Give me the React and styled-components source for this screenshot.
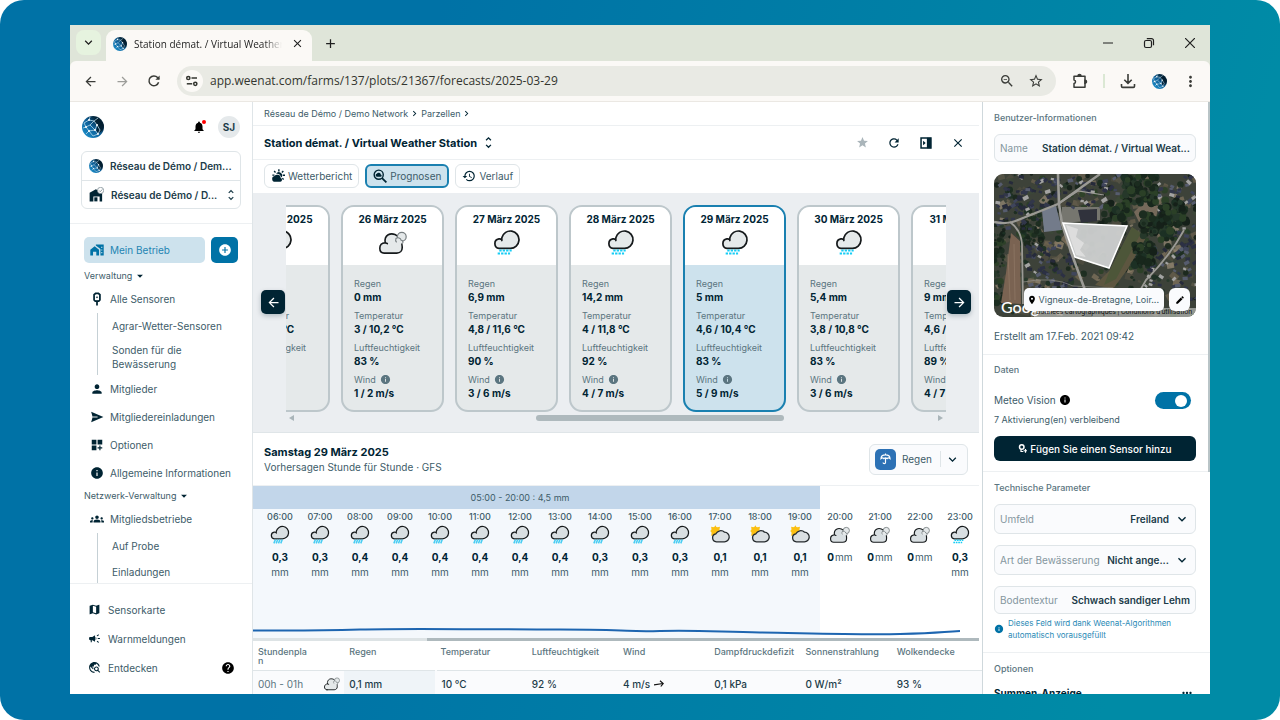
import React from "react";
import styled, { createGlobalStyle, css } from "styled-components";
import {
  MdNotifications, MdAddCircle, MdPerson, MdDashboardCustomize, MdInfo,
  MdGroups, MdMap, MdCampaign, MdTravelExplore, MdHelp, MdStar, MdRefresh, MdClose, MdHistory,
  MdUnfoldMore, MdChevronRight, MdArrowDropDown, MdPlace, MdEdit, MdMoreHoriz, MdStarBorder,
  MdMoreVert, MdZoomOut, MdArrowBack, MdArrowForward, MdExpandMore, MdAdd,
} from "react-icons/md";

const ink = "#002433";
const slate = "#3d5c69";
const muted = "#5b7580";
const line = "#dfe5e8";
const blue = "#0072a6";

const GlobalStyle = createGlobalStyle`
  * { box-sizing: border-box; }
  body { margin: 0; background: #fff; font-family: Inter, "Liberation Sans", sans-serif; color: ${ink}; }
  button, input, select { font: inherit; color: inherit; margin: 0; }
  button { padding: 0; border: 0; background: none; display: flex; align-items: center; justify-content: center; }
  a { color: inherit; text-decoration: none; }
  svg { display: block; flex: none; }
  h1, h2, p, ul { margin: 0; padding: 0; }
  ul { list-style: none; }
`;

const Stage = styled.div`
  height: 100vh;
  padding: 25px 70px 26px;
  display: flex;
  border-radius: 24px;
  background: linear-gradient(105deg, #0072a6 0%, #0072a6 30%, #008ba6 88%);
`;

const BrowserWindow = styled.div`
  flex: 1;
  min-width: 0;
  display: flex;
  flex-direction: column;
  overflow: hidden;
  background: #dfe5d9;
`;

/* Browser chrome */
const TabStrip = styled.div`
  height: 36px;
  padding: 5px 12px 0 6px;
  display: flex;
  align-items: flex-start;
  color: #1f1f1f;
`;
const TabSearch = styled.button`
  width: 25px;
  height: 25px;
  margin-right: 5px;
  border-radius: 8px;
  background: #e6f3df;
`;
const BrowserTab = styled.div`
  width: 206px;
  height: 31px;
  padding: 0 7px 4px;
  display: flex;
  align-items: center;
  gap: 7px;
  border-radius: 9px 9px 0 0;
  background: #fbf9f6;
  font: 10px/16px "Open Sans", sans-serif;
`;
const TabTitle = styled.span`
  flex: 1;
  overflow: hidden;
  white-space: nowrap;
  mask-image: linear-gradient(90deg, #000 88%, transparent);
`;
const NewTab = styled.button`
  width: 36px;
  height: 26px;
`;
const WindowControls = styled.div`
  margin-left: auto;
  height: 26px;
  display: flex;
  align-items: center;
  gap: 25px;
`;
const ControlButton = styled.button`
  width: 16px;
  height: 16px;
`;
const Toolbar = styled.div`
  height: 41px;
  padding: 0 12px;
  display: flex;
  align-items: center;
  border-bottom: 1px solid #ebe8e3;
  border-radius: 6px 6px 0 0;
  background: #fbf9f6;
`;
const NavButtons = styled.div`
  display: flex;
  gap: 16px;
  margin-right: 15px;
`;
const ToolButton = styled.button`
  width: 16px;
  height: 16px;
  color: ${(p) => (p.$dim ? "#9c9d99" : "#3a3c38")};
`;
const UrlBar = styled.div`
  flex: 1;
  height: 30px;
  padding: 0 12px 0 4px;
  display: flex;
  align-items: center;
  gap: 13px;
  border-radius: 15px;
  background: #e9eae4;
`;
const SiteInfo = styled.button`
  width: 22px;
  height: 22px;
  margin-right: -6px;
  border-radius: 50%;
  background: #fbf9f6;
`;
const UrlInput = styled.input`
  flex: 1;
  min-width: 0;
  padding: 0;
  border: 0;
  outline: 0;
  background: none;
  color: #33352f;
  font: 12px/18px "Open Sans", sans-serif;
`;
const ToolbarEnd = styled.div`
  display: flex;
  align-items: center;
  gap: 15px;
  margin-left: 16px;
`;
const ToolbarSeparator = styled.span`
  width: 2px;
  height: 14px;
  background: #dbe8d4;
`;

/* App shell */
const AppShell = styled.div`
  flex: 1;
  min-height: 0;
  display: grid;
  grid-template-columns: 183px minmax(0, 1fr) 228px;
  grid-template-rows: minmax(0, 1fr);
  background: #fff;
  font-size: 10px;
  line-height: 14px;
`;

/* Sidebar */
const Sidebar = styled.aside`
  display: flex;
  flex-direction: column;
  border-right: 1px solid ${line};
  color: ${slate};
`;
const SidebarHeader = styled.div`
  height: 49px;
  padding: 0 12px;
  display: flex;
  align-items: center;
`;
const BellButton = styled.button`
  position: relative;
  margin-left: auto;
  margin-right: 12px;
  color: #000;
`;
const AlertDot = styled.span`
  position: absolute;
  top: 0;
  right: 0;
  width: 4px;
  height: 4px;
  border-radius: 50%;
  background: #f00;
`;
const Avatar = styled.button`
  width: 22px;
  height: 22px;
  border-radius: 50%;
  background: #e5e9eb;
  color: #1c3c49;
  font-size: 10px;
  font-weight: 700;
`;
const NetworkBox = styled.div`
  margin: 0 11px 14px;
  border: 1px solid ${line};
  border-radius: 6px;
`;
const NetworkRow = styled.button`
  width: 100%;
  height: 28px;
  padding: 0 4px 0 7px;
  justify-content: flex-start;
  gap: 7px;
  font-size: 10px;
  font-weight: 600;
  color: #1c3c49;
  white-space: nowrap;
  & + & { border-top: 1px solid ${line}; }
  svg:last-child:not(:first-child) { margin-left: auto; }
`;
const NavScroll = styled.nav`
  flex: 1;
  min-height: 0;
  overflow: hidden;
  padding: 13px 14px 0;
  border-top: 1px solid #edf0f2;
`;
const FarmRow = styled.div`
  display: flex;
  gap: 6px;
  margin-bottom: 4px;
`;
const FarmLink = styled.a`
  width: 121px;
  height: 26px;
  padding: 0 6px;
  display: flex;
  align-items: center;
  gap: 6px;
  border-radius: 5px;
  background: #cde2ed;
  color: #1f85b3;
  svg { color: ${blue}; }
`;
const AddButton = styled.button`
  width: 27px;
  height: 26px;
  border-radius: 5px;
  background: ${blue};
  color: #fff;
`;
const GroupToggle = styled.button`
  height: 18px;
  gap: 1px;
  font-size: 9px;
  svg { color: ${ink}; }
`;
const NavItem = styled.a`
  height: ${(p) => (p.$footer ? 29 : 28)}px;
  padding-left: ${(p) => (p.$footer ? 4 : 6)}px;
  display: flex;
  align-items: center;
  gap: ${(p) => (p.$footer ? 7 : 6)}px;
  svg { color: ${ink}; }
`;
const SubList = styled.ul`
  margin-left: 13px;
  padding-left: 14px;
  border-left: 1px solid #c5d0d5;
`;
const SubItem = styled.li`
  min-height: 26px;
  padding: 4px 0;
  display: flex;
  align-items: center;
  white-space: pre-line;
`;
const SidebarFooter = styled.div`
  height: 111px;
  padding: 11px 14px 0;
  border-top: 1px solid #edf0f2;
`;
const HelpButton = styled.button`
  margin-left: auto;
  margin-right: 3px;
  svg { color: #000; }
`;

/* Main column */
const Main = styled.main`
  min-width: 0;
  padding-right: 3px;
  overflow: hidden;
`;
const Breadcrumbs = styled.nav`
  height: 24px;
  padding-left: 11px;
  display: flex;
  align-items: center;
  gap: 1px;
  border-bottom: 1px solid #edf0f2;
  font-size: 9px;
  color: ${slate};
`;
const TitleBar = styled.div`
  height: 34px;
  padding: 0 13px 0 11px;
  display: flex;
  align-items: center;
  gap: 4px;
  border-bottom: 1px solid #edf0f2;
`;
const StationTitle = styled.h1`
  font-size: 11px;
  line-height: 16px;
  font-weight: 700;
`;
const TitleActions = styled.div`
  display: flex;
  gap: 16px;
  margin-left: auto;
`;
const ViewTabs = styled.div`
  height: 33px;
  padding: 4px 11px 0;
  display: flex;
  gap: 6px;
`;
const ViewTab = styled.button`
  height: 24px;
  padding: 0 6px;
  gap: 3px;
  border: ${(p) => (p.$active ? "2px solid #1a80b0" : `1px solid ${line}`)};
  border-radius: 6px;
  background: ${(p) => (p.$active ? "#cde2ed" : "#fff")};
  color: ${slate};
  font-size: 10px;
  svg { color: ${ink}; }
`;

const Carousel = styled.section`
  height: 240px;
  padding: 12px 8px 0;
  display: grid;
  grid-template-columns: 25px minmax(0, 1fr) 25px;
  border-bottom: 1px solid ${line};
  background: #ebeef1;
`;
const CarouselButton = styled.button`
  width: 24px;
  height: 24px;
  margin-top: 85px;
  justify-self: ${(p) => p.$side};
  border-radius: 5px;
  background: ${ink};
  color: #fff;
  box-shadow: 0 2px 5px rgba(0, 36, 51, 0.25);
`;
const CardStrip = styled.div`
  overflow: hidden;
`;
const CardTrack = styled.div`
  display: flex;
  gap: 11px;
  margin-left: -59px;
`;
const DayCard = styled.article`
  flex: none;
  width: 103px;
  height: 207px;
  overflow: hidden;
  border: 2px solid ${(p) => (p.$selected ? "#1a80b0" : "#bdc7cb")};
  border-radius: 13px;
  background: ${(p) => (p.$selected ? "#cde2ed" : "#e5e9ea")};
`;
const DayHead = styled.header`
  height: 58px;
  padding-top: 5px;
  display: flex;
  flex-direction: column;
  align-items: center;
  gap: 3px;
  background: #fff;
  font-size: 10px;
  line-height: 14px;
  font-weight: 700;
`;
const Measures = styled.div`
  padding: 12px 0 0 11px;
  display: flex;
  flex-direction: column;
  gap: 5px;
`;
const Measure = styled.div`
  white-space: nowrap;
`;
const MeasureLabel = styled.p`
  display: flex;
  align-items: center;
  gap: 4px;
  font-size: 9px;
  line-height: 13px;
  color: ${muted};
`;
const MeasureValue = styled.p`
  font-size: 10px;
  line-height: 14px;
  font-weight: 700;
`;
const ScrollBar = styled.div`
  height: 12px;
  padding: 0 3px;
  display: flex;
  align-items: center;
  color: #aab5ba;
`;
const ScrollThumb = styled.span`
  width: 38%;
  height: 6px;
  margin-left: 37%;
  margin-right: auto;
  border-radius: 3px;
  background: #aeb9bd;
`;

const HourlyHeader = styled.div`
  height: 53px;
  padding: 0 11px;
  display: flex;
  align-items: center;
  justify-content: space-between;
  border-bottom: 1px solid #edf0f2;
`;
const DayTitle = styled.h2`
  font-size: 11px;
  line-height: 15px;
  font-weight: 700;
`;
const DaySubtitle = styled.p`
  color: ${slate};
`;
const MetricPicker = styled.div`
  height: 31px;
  width: 99px;
  padding-left: 5px;
  display: flex;
  align-items: center;
  position: relative;
  border: 1px solid ${line};
  border-radius: 6px;
  background: #fafbfd;
  > svg { position: absolute; right: 7px; pointer-events: none; }
`;
const MetricBadge = styled.span`
  width: 21px;
  height: 21px;
  display: flex;
  align-items: center;
  justify-content: center;
  border-radius: 5px;
  background: #2c71b5;
  color: #fff;
`;
const MetricSelect = styled.select`
  flex: 1;
  align-self: stretch;
  padding: 0 0 0 6px;
  border: 0;
  outline: 0;
  appearance: none;
  background: linear-gradient(${line}, ${line}) 44px center / 1px 16px no-repeat;
  color: ${slate};
`;

const Timeline = styled.section`
  position: relative;
  overflow: hidden;
`;
const TimelineTrack = styled.div`
  width: 760px;
  margin-left: -33px;
`;
const RainBand = styled.div`
  width: 600px;
  height: 23px;
  line-height: 23px;
  text-align: center;
  background: #c2d6ea;
  color: ${slate};
  font-size: 9px;
`;
const Hours = styled.div`
  display: grid;
  grid-template-columns: repeat(19, 40px);
  height: 129px;
`;
const Hour = styled.div`
  display: flex;
  flex-direction: column;
  align-items: center;
  background: ${(p) => (p.$wet ? "#f4f8fc" : "#fff")};
`;
const HourTime = styled.span`
  margin-bottom: 1px;
  font-size: 9px;
  line-height: 15px;
  font-weight: 500;
  color: ${slate};
`;
const HourAmount = styled.p`
  margin-top: 5px;
  width: 28px;
  line-height: 15px;
  text-align: center;
  color: ${slate};
  white-space: ${(p) => (p.$inline ? "nowrap" : "normal")};
  b { font-weight: 700; color: ${ink}; ${(p) => (p.$inline ? "margin-right: 1px;" : "display: block;")} }
`;
const RainCurve = styled.svg`
  position: absolute;
  left: -33px;
  bottom: 3px;
  width: 760px;
  height: 16px;
`;
const TimelineScroll = styled.div`
  height: 3px;
  display: flex;
  justify-content: flex-end;
  background: #dde3e5;
  &::after { content: ""; width: 76%; background: #aeb9bd; }
`;

const HourTable = styled.table`
  width: calc(100% + 4px);
  border-collapse: collapse;
  table-layout: fixed;
  th, td { padding: 0 0 0 5px; text-align: left; white-space: nowrap; }
  th { height: 29px; padding-top: 6px; vertical-align: top; border-bottom: 1px solid ${line}; color: ${muted}; font-size: 9px; line-height: 9px; font-weight: 500; white-space: pre-line; }
  td { height: 28px; background: #fafbfd; color: #1c3c49; font-weight: 500; }
  td:nth-child(2) { background: #eff4f8; background-clip: padding-box; border-right: 2px solid #fafbfd; }
`;
const TimeCell = styled.div`
  display: flex;
  align-items: center;
  justify-content: space-between;
  padding-right: 4px;
  color: ${muted};
  font-weight: 400;
`;
const WindCell = styled.span`
  display: flex;
  align-items: center;
  gap: 4px;
`;

/* Details panel */
const Details = styled.aside`
  position: relative;
  overflow: hidden;
  border-left: 1px solid #cfd8dc;
  color: ${slate};
`;
const PanelThumb = styled.span`
  position: absolute;
  top: 0;
  right: 0;
  width: 2px;
  height: 370px;
  background: #b9c4c7;
`;
const Panel = styled.section`
  padding: ${(p) => (p.$roomy ? 10 : 9)}px 14px ${(p) => (p.$roomy ? 11 : 10)}px 11px;
  border-bottom: 1px solid #edf0f2;
  &:first-child { padding-top: 10px; }
`;
const PanelTitle = styled.h2`
  font-size: 9px;
  line-height: 12px;
  font-weight: 500;
  color: ${muted};
`;
const Field = styled.label`
  height: ${(p) => (p.$tall ? 30 : 28)}px;
  margin-top: ${(p) => p.$gap || 10}px;
  padding: 0 5px;
  display: flex;
  align-items: center;
  gap: 5px;
  border: 1px solid ${line};
  border-radius: 6px;
  background: #fafbfd;
  color: #84969e;
  white-space: nowrap;
`;
const fieldControl = css`
  flex: 1;
  min-width: 0;
  height: 20px;
  padding: 0;
  border: 0;
  outline: 0;
  appearance: none;
  background: none;
  color: #1c3c49;
  font-weight: 600;
`;
const FieldInput = styled.input`
  ${fieldControl}
  text-align: right;
`;
const FieldSelect = styled.select`
  ${fieldControl}
  text-align-last: right;
`;
const FieldArrow = styled.span`
  color: ${ink};
`;
const MapFrame = styled.div`
  position: relative;
  height: 143px;
  margin-top: 12px;
  overflow: hidden;
  border-radius: 9px;
  > svg { width: 100%; height: 100%; }
`;
const MapCredits = styled.div`
  position: absolute;
  right: 0;
  bottom: 0;
  padding: 0 4px 0 2px;
  background: rgba(235, 235, 235, 0.5);
  color: #111;
  font: 7px/9px Roboto, sans-serif;
  white-space: nowrap;
`;
const MapBrand = styled.span`
  position: absolute;
  left: 7px;
  bottom: 0;
  color: #fff;
  font: 500 16px/20px Lato, sans-serif;
`;
const MapOverlay = styled.div`
  position: absolute;
  right: 6px;
  bottom: 6px;
  display: flex;
  gap: 5px;
`;
const PlaceChip = styled.div`
  height: 23px;
  padding: 0 5px 0 3px;
  display: flex;
  align-items: center;
  gap: 2px;
  border-radius: 5px;
  background: #fafbfd;
  font-size: 9px;
  white-space: nowrap;
  svg { color: #000; }
`;
const EditButton = styled.button`
  width: 21px;
  height: 23px;
  border-radius: 6px;
  background: #fafbfd;
  color: #000;
`;
const CreatedAt = styled.p`
  margin: 12px 0 1px;
`;
const SwitchRow = styled.label`
  height: 18px;
  margin-top: 15px;
  padding-right: 5px;
  display: flex;
  align-items: center;
  gap: 3px;
  svg { color: #000; }
`;
const Switch = styled.input`
  position: relative;
  appearance: none;
  width: 36px;
  height: 17px;
  margin-left: auto;
  border-radius: 9px;
  background: ${blue};
  &::after {
    content: "";
    position: absolute;
    top: 3px;
    right: 4px;
    width: 12px;
    height: 12px;
    border-radius: 50%;
    background: #fff;
  }
`;
const Remaining = styled.p`
  margin-top: 5px;
  font-size: 9px;
  line-height: 12px;
`;
const SensorButton = styled.button`
  width: 100%;
  height: 25px;
  margin-top: 10px;
  gap: 3px;
  border-radius: 6px;
  background: ${ink};
  color: #fff;
  font-size: 10px;
  font-weight: 500;
`;
const Hint = styled.p`
  margin-top: 3px;
  display: flex;
  align-items: center;
  gap: 4px;
  font-size: 8px;
  line-height: 12px;
  color: #2a8ab6;
  white-space: pre-line;
  svg { color: ${blue}; }
`;
const SummaryRow = styled.div`
  margin-top: 11px;
  padding-right: 2px;
  display: flex;
  justify-content: space-between;
  align-items: center;
  color: ${ink};
  font-size: 10px;
  font-weight: 700;
`;

/* Drawings */
function Globe({ size }) {
  return (
    <svg width={size} height={size} viewBox="0 0 22 22" aria-hidden="true">
      <defs>
        <linearGradient id="globeFill" x1="0" y1="1" x2="1" y2="0">
          <stop offset="0" stopColor="#1f9ad6" />
          <stop offset="0.5" stopColor="#0d5f98" />
          <stop offset="0.75" stopColor="#04283f" />
        </linearGradient>
      </defs>
      <circle cx="11" cy="11" r="11" fill="url(#globeFill)" />
      <path d="M14 1.500l5 2.500 2.800 5-1 5-4.500 4-2-3.500 1.200-5L12 5z" fill="#031c2c" opacity="0.8" />
      <g fill="none" stroke="#b5d8ea" strokeWidth="0.8">
        <path d="M2 7l5-3 5 1 3 4-2 5-6 1-3-4zM7 4l1-3M12 5l4-3M13 14l3 4M7 15l-3 3M4 11l-3 1M7 15l4 5 5-2M8 9l4-4M8 9l5 5M8 9L4 11M15 9l3 5-2 4" />
      </g>
      <g fill="#fff">
        <circle cx="7" cy="4" r="1" /><circle cx="15" cy="9" r="1" /><circle cx="13" cy="14" r="1" />
        <circle cx="7" cy="15" r="1" /><circle cx="4" cy="11" r="1" /><circle cx="16" cy="18" r="0.9" />
      </g>
    </svg>
  );
}

function WeatherIcon({ kind, size = 28, fill = "#e5e9ea" }) {
  return (
    <svg width={size} height={size} viewBox="0 0 28 28" aria-hidden="true">
      {kind === "sun" && (
        <g>
          <g fill="#fbc013">
            <circle cx="7.5" cy="8.5" r="5.8" />
            <path d="M7.5 0.500l2.500 4h-5zM0 8.500l4-2.500v5zM1.500 2.500l5 1-4 4zM14 2.500l-1 5-4-4zM1.500 15l1-5 4 4z" />
          </g>
          <path
            d="M9 23.500h11a6.700 6.700 0 0 0 .4-13.400 7.600 7.600 0 0 0-12.200 2.300A5.600 5.600 0 0 0 9 23.500z"
            fill="#d9dfe2" stroke="#23292c" strokeWidth="1.800"
          />
        </g>
      )}
      {(kind === "rain" || kind === "drizzle") && (
        <g transform="translate(-1 -2.600) scale(1.070)">
          <path
            d="M6.600 20.500h10.600a8.100 8.100 0 1 0-7.900-10.200c-.2.9-.3 2-.1 2.900M9.200 12.300c-.9-.6-1.700-.8-2.800-.6a4.450 4.450 0 0 0 .2 8.800"
            fill={fill} stroke="#15191b" strokeWidth="1.600" strokeLinecap="round"
          />
          {kind === "rain" ? (
            <path d="M6.800 22.500h11.600M5.300 25.300h11.600" stroke="#17cdf5" strokeWidth="1.900" strokeDasharray="2.200 1" />
          ) : (
            <path d="M8 21.500l-2 5M11 21.500l-2 5M14 21.500l-2 5M17 21.500l-2 5" stroke="#47cdf3" strokeWidth="2" />
          )}
        </g>
      )}
      {kind === "moon" && (
        <g>
          <path
            d="M5.200 24.100h12.600c3.400 0 5.400-2.400 5.400-5.300 0-3 .3-5.500-2-8.300-2-4.800-8-7-12-4.700-2.600 1.500-3.600 4.400-3 8-3 .2-5.400 2.200-5.400 5.400 0 3 1.900 4.900 4.400 4.900zM6 13.700l2.300.9"
            fill={fill} stroke="#15191b" strokeWidth="1.600" strokeLinecap="round"
          />
          <circle cx="22.800" cy="7.700" r="4.400" fill="#e5e9ea" stroke="#777e81" strokeWidth="1.200" />
          <path d="M16.800 9.500c2-1.600 5-.6 5.400 1.800 1.700.2 2.300 1.800 1.500 3.200h-5c-2.200-.2-3-3-1.900-5z" fill="#e5e9ea" />
          <path d="M16.800 9.500c2-1.600 5-.6 5.400 1.800 1.700.2 2.300 1.800 1.300 3.200M17 9.400c-.7 1.600-.3 3 .6 3.900" fill="none" stroke="#777e81" strokeWidth="1.100" />
        </g>
      )}
    </svg>
  );
}

const SunCloudIcon = () => (
  <svg width="14" height="14" viewBox="0 0 24 24" fill="currentColor">
    <path d="M7 22a5 5 0 0 1-1-9.900 6 6 0 0 1 10.700 3.200A3.500 3.500 0 0 1 16 22z" />
    <path d="M8.700 8.200a5.600 5.600 0 0 1 9.500 6.100 5.400 5.400 0 0 0-1-.5 7.600 7.600 0 0 0-8.500-5.600z" />
    <path d="M12.300 0.500h2.400v3.600h-2.400zM20.300 9.500H24v2.400h-3.700zM4.500 4.300l1.700-1.700 2.400 2.500-1.700 1.700zM17.800 5.200l2.500-2.500L22 4.400l-2.500 2.500zM18.600 16.500l1.600-1.600 2.200 2.200-1.600 1.600zM2.300 9.500H6v2H2.300z" />
  </svg>
);
const ForecastIcon = () => (
  <svg width="14" height="14" viewBox="0 0 24 24" fill="none" stroke="currentColor" strokeWidth="2.400">
    <circle cx="9.800" cy="9.800" r="7.800" />
    <path d="M15.500 15.500L23 23" strokeWidth="3" />
    <path d="M6.800 13.400a2.700 2.700 0 0 1-.2-5.300 3.800 3.800 0 0 1 6.800 1.400 2 2 0 0 1-.2 3.900z" fill="currentColor" stroke="none" />
  </svg>
);
const FarmIcon = () => (
  <svg width="14" height="14" viewBox="0 0 24 24" fill="currentColor">
    <path d="M0.500 21.500V11.500L8 5.500l7.500 6v10h-4.700v-6.300H5.200v6.300z" />
    <path d="M10 2.500h13.500v19h-5.600V10.300L10 4.200z" />
    <path d="M19.300 6.500h1.800v2h-1.800zM19.300 11h1.800v2h-1.800zM19.300 15.500h1.800v2h-1.800z" fill="#cde2ed" />
  </svg>
);
const SendIcon = () => (
  <svg width="14" height="14" viewBox="0 0 24 24">
    <path d="M2 3l21 9-21 9 2.500-9z" fill="currentColor" />
    <path d="M4 12h9" stroke="#fff" strokeWidth="1.600" />
  </svg>
);
const PinIcon = () => (
  <svg width="14" height="14" viewBox="0 0 24 24" fill="none" stroke="currentColor" strokeWidth="3">
    <path d="M7 4.500L9.500 2.500h5L17 4.500v9l-2 2H9l-2-2z" />
    <circle cx="12" cy="9" r="1" fill="currentColor" strokeWidth="1" />
    <path d="M12 15v8" />
  </svg>
);
const BarnIcon = () => (
  <svg width="15" height="15" viewBox="0 0 24 24">
    <path d="M1 9l10-5.500L21 9v14h-4v-8H7v8H1z" fill="#002433" />
    <path d="M8.500 16.500h5V23h-5z" fill="#002433" />
    <circle cx="18.500" cy="5.500" r="5" fill="#fff" stroke="#6d7f87" strokeWidth="1.100" />
    <path d="M16 5.500l2 2 3.200-3.600" fill="none" stroke="#6d7f87" strokeWidth="1.300" />
  </svg>
);
const SidePanelIcon = () => (
  <svg width="14" height="14" viewBox="0 0 24 24">
    <path d="M3.500 3.500h17v17h-17z" fill="none" stroke="#002433" strokeWidth="2.600" />
    <path d="M13.500 3h7v18h-7z" fill="#002433" />
    <path d="M7 8l4.500 4L7 16z" fill="#002433" />
  </svg>
);
const UmbrellaIcon = () => (
  <svg width="11" height="12" viewBox="0 0 11 12" fill="none" stroke="currentColor" strokeWidth="1.200">
    <path d="M5.500 0.500v1.200M1 5.600C1 3.200 3 1.800 5.500 1.800S10 3.200 10 5.600c-1-.9-2.100-.9-2.900 0-1-.9-2.200-.9-3.200 0-.8-.9-1.900-.9-2.900 0zM5.500 5.500v4a1.200 1.200 0 0 1-2.400 0" />
  </svg>
);
const TuneIcon = () => (
  <svg width="14" height="14" viewBox="0 0 14 14" fill="none" stroke="#33352f" strokeWidth="1.500">
    <circle cx="3.300" cy="4" r="1.600" /><path d="M6.500 4H12" />
    <circle cx="10.300" cy="9.800" r="1.600" /><path d="M1.800 9.800h5.400" />
  </svg>
);
const PuzzleIcon = () => (
  <svg width="16" height="16" viewBox="0 0 16 16" fill="none" stroke="currentColor" strokeWidth="1.500">
    <path d="M2 3.200h11v11H2v-3.700c2-.4 2-3.200 0-3.600z" strokeLinejoin="round" />
    <path d="M6 3a1.500 1.500 0 0 1 3 0z" fill="currentColor" />
    <path d="M13 7.200a1.500 1.500 0 0 1 0 3z" fill="currentColor" />
  </svg>
);
const DownloadIcon = () => (
  <svg width="16" height="16" viewBox="0 0 16 16" fill="none" stroke="currentColor" strokeWidth="1.600">
    <path d="M8 1v9M4.300 6.700L8 10.300l3.700-3.600M1.500 11v2.200c0 .7.400 1.200 1.200 1.200h10.600c.8 0 1.200-.5 1.200-1.200V11" />
  </svg>
);
const ReloadIcon = () => (
  <svg width="14" height="14" viewBox="0 0 14 14">
    <path d="M11.600 8.300A4.900 4.900 0 1 1 10.600 3.600L12 5" fill="none" stroke="currentColor" strokeWidth="1.500" />
    <path d="M12.600 1.500v4.200H8.400z" fill="currentColor" />
  </svg>
);
const RestoreIcon = () => (
  <svg width="12" height="12" viewBox="0 0 12 12" fill="none" stroke="currentColor" strokeWidth="1.200">
    <rect x="1.500" y="3.500" width="7" height="7" rx="1.500" />
    <path d="M3.800 1.600H8.500a2 2 0 0 1 2 2v4.700" />
  </svg>
);
const SensorAddIcon = () => (
  <svg width="9" height="9" viewBox="0 0 12 12" fill="none" stroke="currentColor" strokeWidth="2">
    <circle cx="5" cy="4" r="3" />
    <path d="M4 7v3h3M10 6.500v5M7.500 9h5" strokeWidth="1.600" />
  </svg>
);
const ScrollArrow = ({ back }) => (
  <svg width="5" height="6" viewBox="0 0 5 6"><path d={back ? "M5 0v6L0 3z" : "M0 0v6l5-3z"} fill="currentColor" /></svg>
);
const WindArrow = () => (
  <svg width="10" height="8" viewBox="0 0 10 8" fill="none" stroke="#111" strokeWidth="1.200">
    <path d="M0 4.800L9 3.500M6 0.800L9.200 3.500 6.800 6.500" />
  </svg>
);

/* Seeded generator so that the aerial view is identical on every render */
function seeded(seed) {
  let s = seed;
  return () => {
    s = (s * 1664525 + 1013904223) % 4294967296;
    return s / 4294967296;
  };
}
function scatter(seed, count, x, y, w, h) {
  const r = seeded(seed);
  return Array.from({ length: count }, () => ({ x: x + r() * w, y: y + r() * h, s: r(), a: r() * 90 - 45, k: Math.floor(r() * 6) }));
}
const roofs = ["#262a3a", "#32374a", "#3f455b", "#565c6e", "#a3a3a2", "#2c3044"];
const soils = ["#6e6450", "#857660", "#514f40", "#9a8c76", "#5c5a49", "#3c4838"];
const greens = ["#18271c", "#1c3024", "#26382a", "#152019", "#2b4027", "#1b2c1f"];
const lots = scatter(3, 230, 0, 0, 202, 143);
const houses = [
  ...scatter(7, 85, 0, 0, 125, 34), ...scatter(8, 65, 30, 68, 50, 50), ...scatter(10, 22, 0, 30, 50, 24),
  ...scatter(9, 60, 142, 70, 60, 60), ...scatter(11, 35, 150, 0, 52, 38), ...scatter(13, 20, 170, 50, 32, 30),
];
const trees = [...scatter(21, 240, 0, 0, 202, 143), ...scatter(22, 45, 0, 55, 10, 80), ...scatter(23, 50, 28, 42, 20, 30)];
const grove = [...scatter(31, 70, 128, 0, 34, 30), ...scatter(32, 60, 148, 40, 34, 26), ...scatter(33, 40, 140, 68, 20, 26), ...scatter(34, 50, 165, 26, 28, 25), ...scatter(35, 24, 112, 28, 24, 18)];

function AerialMap() {
  return (
    <svg viewBox="0 0 202 143" preserveAspectRatio="xMidYMid slice" role="img" aria-label="Luftbild">
      <rect width="202" height="143" fill="#3d4239" />
      {lots.map((p, i) => (
        <rect key={i} x={p.x} y={p.y} width={3 + p.s * 6} height={2 + p.s * 5} fill={soils[p.k]} opacity="0.7" transform={`rotate(${p.a} ${p.x} ${p.y})`} />
      ))}
      {trees.map((p, i) => <circle key={i} cx={p.x} cy={p.y} r={1 + p.s * 2.5} fill={greens[p.k]} opacity="0.9" />)}
      <path d="M17 59l9 8 1 63-20-1 5-30z" fill="#7a6352" />
      <path d="M14 80l2 46M20 70l1 56" stroke="#8a7361" strokeWidth="1" />
      <path d="M48 36l14-4 6 24-18 2z" fill="#737b8a" />
      <path d="M68 33h38v13l-38 3z" fill="#76766f" />
      <path d="M84 36l19-1v12l-16 2z" fill="#30323c" />
      {houses.map((p, i) => (
        <rect key={i} x={p.x} y={p.y} width={3 + p.s * 3} height={2 + p.s * 2} fill={roofs[p.k]} transform={`rotate(${p.a} ${p.x} ${p.y})`} />
      ))}
      <path d="M138 53l14 11-19 32-14 19-18-4 15-15z" fill="#5d5640" />
      <path d="M138 53l9 6-25 46-12 6 6-15z" fill="#4d5639" />
      <path d="M140 38l10-10 14 4-2 14-14 8z" fill="#75695a" />
      {grove.map((p, i) => <circle key={i} cx={p.x} cy={p.y} r={1.5 + p.s * 3} fill={greens[p.k]} />)}
      <g fill="none" stroke="#9b9a95">
        <path d="M64 0l1 30 3 20 9 28 14 38" strokeWidth="2.600" />
        <path d="M0 48q14 3 24-2l40-16 42-30" strokeWidth="2.400" />
        <path d="M16 48q11 8 12 22l1 60" strokeWidth="1.800" />
        <path d="M190 56q-14 26-38 50l-8 14" strokeWidth="1.800" />
        <path d="M66 29l18-12 26 4" strokeWidth="1.200" />
        <path d="M29 108q30-6 50 4l40 2" strokeWidth="1" opacity="0.6" />
      </g>
      <path d="M69 49l64 3-18 42-34-11z" fill="#cfd1d1" fillOpacity="0.95" stroke="#fff" strokeWidth="1.600" />
      <path d="M72 51l12 4-2 8 8 6-4 7 6 7-10-2z" fill="#e2e2e2" opacity="0.8" />
    </svg>
  );
}

/* Data */
const days = [
  { date: "25 März 2025", icon: "rain", rain: "2,1 mm", temp: "3,4 / 9,7 °C", hum: "86 %", wind: "2 / 4 m/s" },
  { date: "26 März 2025", icon: "moon", rain: "0 mm", temp: "3 / 10,2 °C", hum: "83 %", wind: "1 / 2 m/s" },
  { date: "27 März 2025", icon: "rain", rain: "6,9 mm", temp: "4,8 / 11,6 °C", hum: "90 %", wind: "3 / 6 m/s" },
  { date: "28 März 2025", icon: "rain", rain: "14,2 mm", temp: "4 / 11,8 °C", hum: "92 %", wind: "4 / 7 m/s" },
  { date: "29 März 2025", icon: "rain", rain: "5 mm", temp: "4,6 / 10,4 °C", hum: "83 %", wind: "5 / 9 m/s", selected: true },
  { date: "30 März 2025", icon: "rain", rain: "5,4 mm", temp: "3,8 / 10,8 °C", hum: "83 %", wind: "3 / 6 m/s" },
  { date: "31 März 2025", icon: "rain", rain: "9 mm", temp: "4,6 / 11,2 °C", hum: "89 %", wind: "4 / 7 m/s" },
];
const hourly = [
  ["05:00", "0,3", "drizzle"], ["06:00", "0,3", "drizzle"], ["07:00", "0,3", "drizzle"], ["08:00", "0,4", "drizzle"],
  ["09:00", "0,4", "drizzle"], ["10:00", "0,4", "drizzle"], ["11:00", "0,4", "drizzle"], ["12:00", "0,4", "drizzle"],
  ["13:00", "0,4", "drizzle"], ["14:00", "0,3", "drizzle"], ["15:00", "0,3", "drizzle"], ["16:00", "0,3", "drizzle"],
  ["17:00", "0,1", "sun"], ["18:00", "0,1", "sun"], ["19:00", "0,1", "sun"], ["20:00", "0", "moon"],
  ["21:00", "0", "moon"], ["22:00", "0", "moon"], ["23:00", "0,3", "rain"],
];
const columns = ["Stundenpla\nn", "Regen", "Temperatur", "Luftfeuchtigkeit", "Wind", "Dampfdruckdefizit", "Sonnenstrahlung", "Wolkendecke"];

function DayForecast({ day }) {
  const rows = [["Regen", day.rain], ["Temperatur", day.temp], ["Luftfeuchtigkeit", day.hum], ["Wind", day.wind]];
  return (
    <DayCard $selected={day.selected}>
      <DayHead>
        {day.date}
        <WeatherIcon kind={day.icon} />
      </DayHead>
      <Measures>
        {rows.map(([label, value]) => (
          <Measure key={label}>
            <MeasureLabel>{label}{label === "Wind" && <MdInfo size={11} />}</MeasureLabel>
            <MeasureValue>{value}</MeasureValue>
          </Measure>
        ))}
      </Measures>
    </DayCard>
  );
}

export default function App() {
  return (
    <>
      <GlobalStyle />
      <Stage>
        <BrowserWindow>
          <TabStrip>
            <TabSearch aria-label="Tabs durchsuchen"><MdExpandMore size={15} /></TabSearch>
            <BrowserTab>
              <Globe size={14} />
              <TabTitle>Station démat. / Virtual Weather</TabTitle>
              <ControlButton aria-label="Tab schließen"><MdClose size={13} /></ControlButton>
            </BrowserTab>
            <NewTab aria-label="Neuer Tab"><MdAdd size={15} /></NewTab>
            <WindowControls>
              <ControlButton aria-label="Minimieren">
                <svg width="10" height="10" viewBox="0 0 10 10"><path d="M0 5h10" stroke="currentColor" /></svg>
              </ControlButton>
              <ControlButton aria-label="Verkleinern"><RestoreIcon /></ControlButton>
              <ControlButton aria-label="Schließen">
                <svg width="10" height="10" viewBox="0 0 10 10"><path d="M0 0l10 10M10 0L0 10" stroke="currentColor" strokeWidth="1.200" /></svg>
              </ControlButton>
            </WindowControls>
          </TabStrip>
          <Toolbar>
            <NavButtons>
              <ToolButton aria-label="Zurück"><MdArrowBack size={15} /></ToolButton>
              <ToolButton aria-label="Vorwärts" $dim><MdArrowForward size={15} /></ToolButton>
              <ToolButton aria-label="Neu laden"><ReloadIcon /></ToolButton>
            </NavButtons>
            <UrlBar>
              <SiteInfo aria-label="Website-Informationen"><TuneIcon /></SiteInfo>
              <UrlInput aria-label="Adresse" readOnly value="app.weenat.com/farms/137/plots/21367/forecasts/2025-03-29" />
              <ToolButton aria-label="Zoom"><MdZoomOut size={16} /></ToolButton>
              <ToolButton aria-label="Lesezeichen"><MdStarBorder size={16} /></ToolButton>
            </UrlBar>
            <ToolbarEnd>
              <ToolButton aria-label="Erweiterungen"><PuzzleIcon /></ToolButton>
              <ToolbarSeparator />
              <ToolButton aria-label="Downloads"><DownloadIcon /></ToolButton>
              <ToolButton aria-label="Profil"><Globe size={15} /></ToolButton>
              <ToolButton aria-label="Menü"><MdMoreVert size={17} /></ToolButton>
            </ToolbarEnd>
          </Toolbar>

          <AppShell>
            <Sidebar>
              <SidebarHeader>
                <Globe size={22} />
                <BellButton aria-label="Benachrichtigungen"><MdNotifications size={14} /><AlertDot /></BellButton>
                <Avatar>SJ</Avatar>
              </SidebarHeader>
              <NetworkBox>
                <NetworkRow><Globe size={14} />Réseau de Démo / Dem...</NetworkRow>
                <NetworkRow><BarnIcon />Réseau de Démo / D...<MdUnfoldMore size={14} /></NetworkRow>
              </NetworkBox>
              <NavScroll>
                <FarmRow>
                  <FarmLink href="#farm"><FarmIcon />Mein Betrieb</FarmLink>
                  <AddButton aria-label="Hinzufügen"><MdAddCircle size={14} /></AddButton>
                </FarmRow>
                <GroupToggle>Verwaltung<MdArrowDropDown size={14} /></GroupToggle>
                <NavItem href="#sensors"><PinIcon />Alle Sensoren</NavItem>
                <SubList>
                  <SubItem><a href="#agro">Agrar-Wetter-Sensoren</a></SubItem>
                  <SubItem><a href="#probes">{"Sonden für die\nBewässerung"}</a></SubItem>
                </SubList>
                <NavItem href="#members"><MdPerson size={14} />Mitglieder</NavItem>
                <NavItem href="#invites"><SendIcon />Mitgliedereinladungen</NavItem>
                <NavItem href="#options"><MdDashboardCustomize size={14} />Optionen</NavItem>
                <NavItem href="#info"><MdInfo size={14} />Allgemeine Informationen</NavItem>
                <GroupToggle>Netzwerk-Verwaltung<MdArrowDropDown size={14} /></GroupToggle>
                <NavItem href="#farms"><MdGroups size={14} />Mitgliedsbetriebe</NavItem>
                <SubList>
                  <SubItem><a href="#trial">Auf Probe</a></SubItem>
                  <SubItem><a href="#pending">Einladungen</a></SubItem>
                </SubList>
              </NavScroll>
              <SidebarFooter>
                <NavItem $footer href="#map"><MdMap size={13} />Sensorkarte</NavItem>
                <NavItem $footer href="#alerts"><MdCampaign size={13} />Warnmeldungen</NavItem>
                <NavItem as="div" $footer>
                  <MdTravelExplore size={13} /><a href="#discover">Entdecken</a>
                  <HelpButton aria-label="Hilfe"><MdHelp size={14} /></HelpButton>
                </NavItem>
              </SidebarFooter>
            </Sidebar>

            <Main>
              <Breadcrumbs>
                <a href="#network">Réseau de Démo / Demo Network</a><MdChevronRight size={11} color={ink} />
                <a href="#plots">Parzellen</a><MdChevronRight size={11} color={ink} />
              </Breadcrumbs>
              <TitleBar>
                <StationTitle>Station démat. / Virtual Weather Station</StationTitle>
                <MdUnfoldMore size={15} />
                <TitleActions>
                  <ControlButton aria-label="Favorit"><MdStar size={13} color="#aab5ba" /></ControlButton>
                  <ControlButton aria-label="Aktualisieren"><MdRefresh size={14} /></ControlButton>
                  <ControlButton aria-label="Seitenleiste"><SidePanelIcon /></ControlButton>
                  <ControlButton aria-label="Schließen"><MdClose size={14} /></ControlButton>
                </TitleActions>
              </TitleBar>
              <ViewTabs>
                <ViewTab><SunCloudIcon />Wetterbericht</ViewTab>
                <ViewTab $active><ForecastIcon />Prognosen</ViewTab>
                <ViewTab><MdHistory size={14} />Verlauf</ViewTab>
              </ViewTabs>
              <Carousel>
                <CarouselButton $side="start" aria-label="Vorherige Tage"><MdArrowBack size={15} /></CarouselButton>
                <CardStrip>
                  <CardTrack>{days.map((d) => <DayForecast key={d.date} day={d} />)}</CardTrack>
                  <ScrollBar><ScrollArrow back /><ScrollThumb /><ScrollArrow /></ScrollBar>
                </CardStrip>
                <CarouselButton $side="end" aria-label="Nächste Tage"><MdArrowForward size={15} /></CarouselButton>
              </Carousel>
              <HourlyHeader>
                <div>
                  <DayTitle>Samstag 29 März 2025</DayTitle>
                  <DaySubtitle>Vorhersagen Stunde für Stunde · GFS</DaySubtitle>
                </div>
                <MetricPicker>
                  <MetricBadge><UmbrellaIcon /></MetricBadge>
                  <MetricSelect aria-label="Messgröße"><option>Regen</option></MetricSelect>
                  <MdExpandMore size={15} />
                </MetricPicker>
              </HourlyHeader>
              <Timeline>
                <TimelineTrack>
                  <RainBand>05:00 - 20:00 : 4,5 mm</RainBand>
                  <Hours>
                    {hourly.map(([time, amount, icon], i) => (
                      <Hour key={time} $wet={i < 15}>
                        <HourTime>{time}</HourTime>
                        <WeatherIcon kind={icon} size={20} fill="#d9dfe2" />
                        <HourAmount $inline={amount === "0"}><b>{amount}</b>mm</HourAmount>
                      </Hour>
                    ))}
                  </Hours>
                </TimelineTrack>
                <RainCurve viewBox="0 0 760 16" aria-hidden="true">
                  <path d="M0 8C60 9 90 9 140 7.500S260 7.500 340 7.500S400 10 440 9S500 10 540 10.500S640 13 680 12S720 10 740 9" fill="none" stroke="#1d65b0" strokeWidth="2" />
                </RainCurve>
                <TimelineScroll />
              </Timeline>
              <HourTable>
                <thead><tr>{columns.map((c) => <th key={c} scope="col">{c}</th>)}</tr></thead>
                <tbody>
                  <tr>
                    <td><TimeCell>00h - 01h<WeatherIcon kind="moon" size={16} /></TimeCell></td>
                    <td>0,1 mm</td>
                    <td>10 °C</td>
                    <td>92 %</td>
                    <td><WindCell>4 m/s<WindArrow /></WindCell></td>
                    <td>0,1 kPa</td>
                    <td>0 W/m²</td>
                    <td>93 %</td>
                  </tr>
                </tbody>
              </HourTable>
            </Main>

            <Details>
              <Panel>
                <PanelTitle>Benutzer-Informationen</PanelTitle>
                <Field>Name<FieldInput readOnly value="Station démat. / Virtual Weat..." /></Field>
                <MapFrame>
                  <AerialMap />
                  <MapBrand>Google</MapBrand>
                  <MapCredits>Données cartographiques | Conditions d'utilisation</MapCredits>
                  <MapOverlay>
                    <PlaceChip><MdPlace size={10} />Vigneux-de-Bretagne, Loir...</PlaceChip>
                    <EditButton aria-label="Bearbeiten"><MdEdit size={10} /></EditButton>
                  </MapOverlay>
                </MapFrame>
                <CreatedAt>Erstellt am 17.Feb. 2021 09:42</CreatedAt>
              </Panel>
              <Panel>
                <PanelTitle>Daten</PanelTitle>
                <SwitchRow>Meteo Vision<MdInfo size={12} /><Switch type="checkbox" role="switch" defaultChecked /></SwitchRow>
                <Remaining>7 Aktivierung(en) verbleibend</Remaining>
                <SensorButton><SensorAddIcon />Fügen Sie einen Sensor hinzu</SensorButton>
              </Panel>
              <Panel $roomy>
                <PanelTitle>Technische Parameter</PanelTitle>
                <Field $tall>Umfeld<FieldSelect><option>Freiland</option></FieldSelect><FieldArrow><MdExpandMore size={16} /></FieldArrow></Field>
                <Field $tall $gap={11}>Art der Bewässerung<FieldSelect><option>Nicht ange...</option></FieldSelect><FieldArrow><MdExpandMore size={16} /></FieldArrow></Field>
                <Field $gap={11}>Bodentextur<FieldInput readOnly value="Schwach sandiger Lehm" /></Field>
                <Hint><MdInfo size={10} />{"Dieses Feld wird dank Weenat-Algorithmen\nautomatisch vorausgefüllt"}</Hint>
              </Panel>
              <Panel $roomy>
                <PanelTitle>Optionen</PanelTitle>
                <SummaryRow>Summen-Anzeige<MdMoreHoriz size={14} /></SummaryRow>
              </Panel>
              <PanelThumb />
            </Details>
          </AppShell>
        </BrowserWindow>
      </Stage>
    </>
  );
}
